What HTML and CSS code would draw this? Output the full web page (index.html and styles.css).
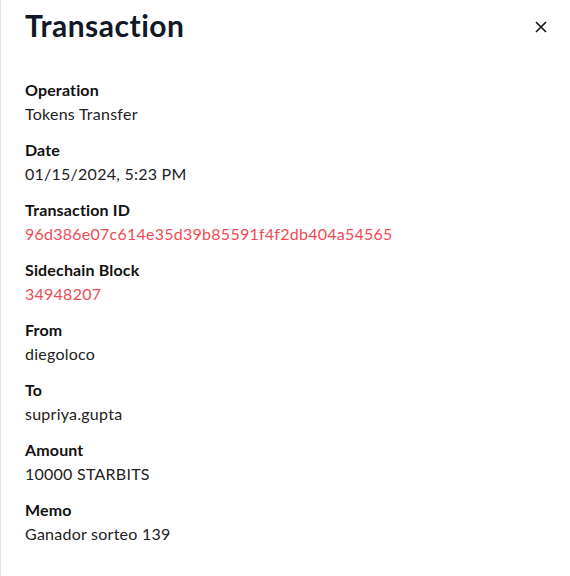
FILE: index.html
```html
<!DOCTYPE html>
<html>
<head>
<meta charset="utf-8">
<link rel="stylesheet" href="styles.css">
</head>
<body>
<div class="panel">
  <div class="header">
    <h2 class="title">Transaction</h2>
    <button class="close" aria-label="Close">
      <svg width="12" height="12" viewBox="0 0 12 12"><path d="M1 1L11 11M11 1L1 11" stroke="#111" stroke-width="1.6" fill="none"/></svg>
    </button>
  </div>
  <div class="fields">
    <div class="field"><div class="label">Operation</div><div class="value">Tokens Transfer</div></div>
    <div class="field"><div class="label">Date</div><div class="value">01/15/2024, 5:23 PM</div></div>
    <div class="field"><div class="label">Transaction ID</div><div class="value link">96d386e07c614e35d39b85591f4f2db404a54565</div></div>
    <div class="field"><div class="label">Sidechain Block</div><div class="value link">34948207</div></div>
    <div class="field"><div class="label">From</div><div class="value">diegoloco</div></div>
    <div class="field"><div class="label">To</div><div class="value">supriya.gupta</div></div>
    <div class="field"><div class="label">Amount</div><div class="value">10000 STARBITS</div></div>
    <div class="field"><div class="label">Memo</div><div class="value">Ganador sorteo 139</div></div>
  </div>
</div>
</body>
</html>
```
FILE: styles.css
```css
html, body {
  margin: 0;
  padding: 0;
  background: #fff;
}
body {
  font-family: Lato, "Noto Sans", sans-serif;
  color: #111827;
}
.panel {
  border-left: 1px solid #e2e2ea;
  min-height: 576px;
  box-sizing: border-box;
  padding: 0 26px 0 24px;
}
.header {
  display: flex;
  justify-content: space-between;
  align-items: center;
  height: 50px;
}
.title {
  margin: 0;
  font-size: 30px;
  letter-spacing: 0.5px;
  font-weight: 700;
  color: #111827;
}
.close {
  border: none;
  background: none;
  padding: 0;
  width: 12px;
  height: 12px;
  margin-right: -3px;
  margin-top: 3px;
  display: flex;
  cursor: pointer;
}
.fields {
  display: flex;
  flex-direction: column;
  gap: 12px;
  padding-top: 28px;
}
.field {
  display: flex;
  flex-direction: column;
}
.label {
  font-size: 16px;
  font-weight: 700;
  line-height: 24px;
  letter-spacing: 0.15px;
  color: #111;
}
.value {
  font-size: 16px;
  line-height: 24px;
  letter-spacing: 0.25px;
  color: #222;
}
.value.link {
  color: #f04b55;
}
```
